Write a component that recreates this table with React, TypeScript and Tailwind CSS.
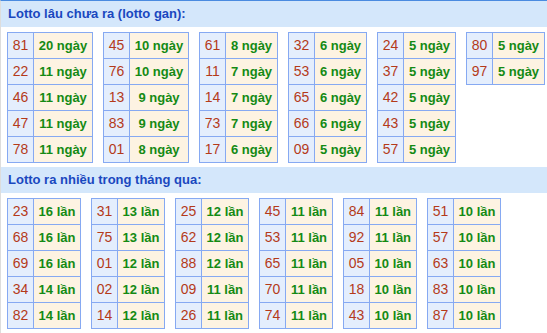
import React from "react";

type Row = [string, string];

const gan: { w: string; rows: Row[] }[] = [
  { w: "w-[86px]", rows: [["81", "20 ngày"], ["22", "11 ngày"], ["46", "11 ngày"], ["47", "11 ngày"], ["78", "11 ngày"]] },
  { w: "w-[86px]", rows: [["45", "10 ngày"], ["76", "10 ngày"], ["13", "9 ngày"], ["83", "9 ngày"], ["01", "8 ngày"]] },
  { w: "w-[79px]", rows: [["61", "8 ngày"], ["11", "7 ngày"], ["14", "7 ngày"], ["73", "7 ngày"], ["17", "6 ngày"]] },
  { w: "w-[79px]", rows: [["32", "6 ngày"], ["53", "6 ngày"], ["65", "6 ngày"], ["66", "6 ngày"], ["09", "5 ngày"]] },
  { w: "w-[79px]", rows: [["24", "5 ngày"], ["37", "5 ngày"], ["42", "5 ngày"], ["43", "5 ngày"], ["57", "5 ngày"]] },
  { w: "w-[79px]", rows: [["80", "5 ngày"], ["97", "5 ngày"]] },
];

const nhieu: Row[][] = [
  [["23", "16 lần"], ["68", "16 lần"], ["69", "16 lần"], ["34", "14 lần"], ["82", "14 lần"]],
  [["31", "13 lần"], ["75", "13 lần"], ["01", "12 lần"], ["02", "12 lần"], ["14", "12 lần"]],
  [["25", "12 lần"], ["62", "12 lần"], ["88", "12 lần"], ["09", "11 lần"], ["26", "11 lần"]],
  [["45", "11 lần"], ["53", "11 lần"], ["65", "11 lần"], ["70", "11 lần"], ["74", "11 lần"]],
  [["84", "11 lần"], ["92", "11 lần"], ["05", "10 lần"], ["18", "10 lần"], ["43", "10 lần"]],
  [["51", "10 lần"], ["57", "10 lần"], ["63", "10 lần"], ["83", "10 lần"], ["87", "10 lần"]],
];

function LoTable({ rows, w }: { rows: Row[]; w: string }) {
  return (
    <div className={`${w} shrink-0 self-start grid grid-cols-[26px_1fr] border-t border-l border-[#86a9f2]`}>
      {rows.map(([num, txt]) => (
        <React.Fragment key={num}>
          <div className="h-[26px] flex items-center justify-center bg-[#e4eefd] border-r border-b border-[#86a9f2] text-[14px] text-[#b43a1a]">
            {num}
          </div>
          <div className="h-[26px] flex items-center justify-center bg-[#fdf3e2] border-r border-b border-[#86a9f2] text-[13px] font-bold text-[#148a14]">
            {txt}
          </div>
        </React.Fragment>
      ))}
    </div>
  );
}

function Heading({ children }: { children: React.ReactNode }) {
  return (
    <div className="h-[26px] flex items-center px-[7px] bg-[#d4e7fb] text-[13px] font-bold text-[#1a48bf]">
      {children}
    </div>
  );
}

export default function App() {
  return (
    <div
      className="w-[547px] h-[333px] bg-white border-t border-t-[#4a8be0] border-l border-l-[#dddddd] overflow-hidden"
      style={{ fontFamily: '"Liberation Sans", Arial, sans-serif' }}
    >
      <Heading>Lotto lâu chưa ra (lotto gan):</Heading>
      <div className="flex gap-[10px] px-[6px] mt-[5px]">
        {gan.map((t, i) => (
          <LoTable key={i} rows={t.rows} w={t.w} />
        ))}
      </div>

      <div className="mt-[4px]">
        <Heading>Lotto ra nhiều trong tháng qua:</Heading>
      </div>
      <div className="flex gap-[10px] px-[6px] mt-[5px]">
        {nhieu.map((rows, i) => (
          <LoTable key={i} rows={rows} w="w-[74px]" />
        ))}
      </div>
    </div>
  );
}
